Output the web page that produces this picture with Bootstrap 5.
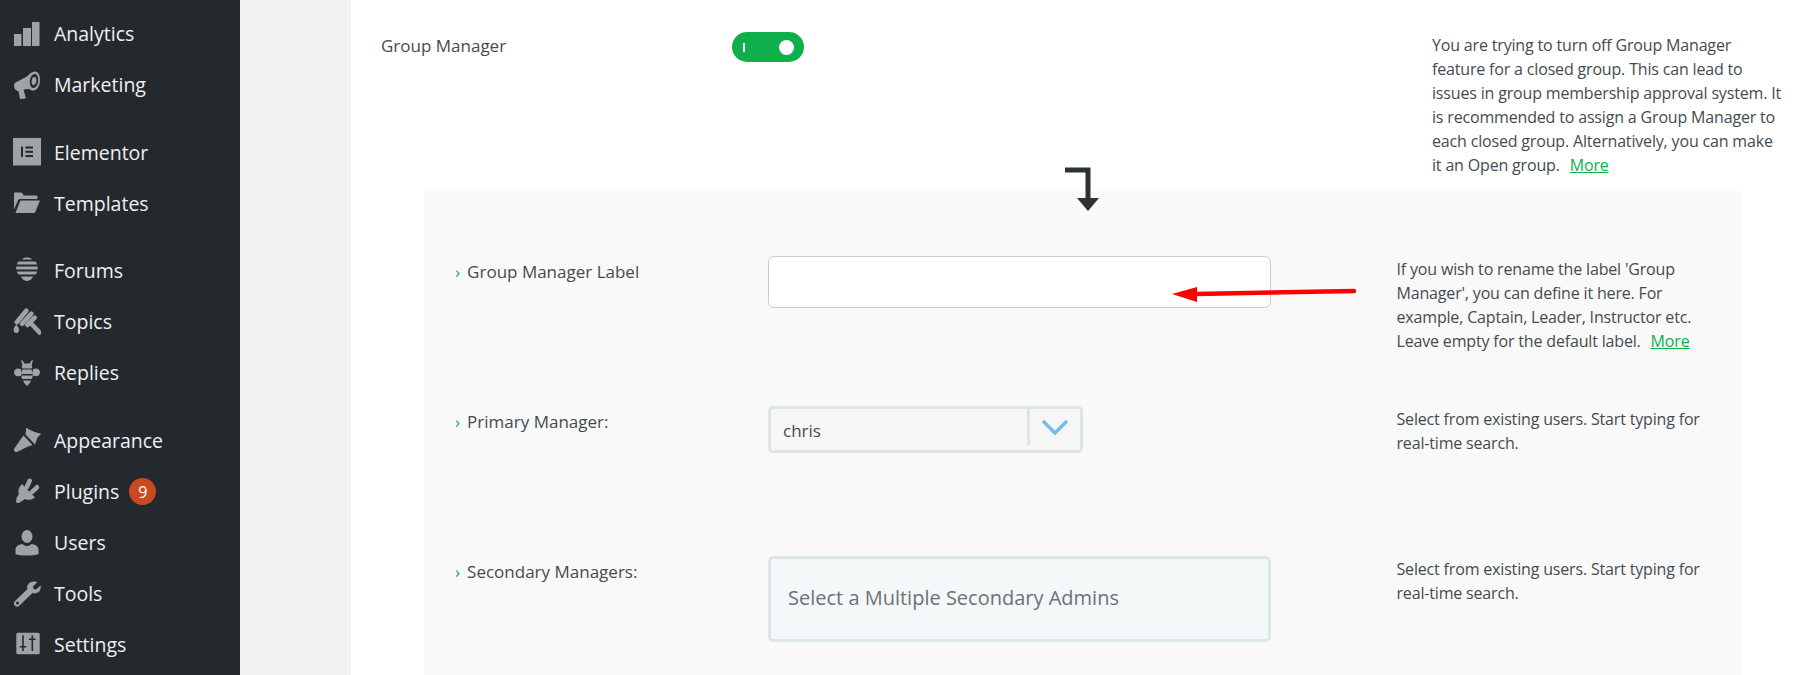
<!DOCTYPE html>
<html lang="en">
<head>
<meta charset="utf-8">
<title>Group Manager settings</title>
<link href="https://cdn.jsdelivr.net/npm/bootstrap@5.3.0/dist/css/bootstrap.min.css" rel="stylesheet">
<style>
html,body{height:675px;overflow:hidden;background:#f1f1f1}
body{font-family:"Open Sans","Noto Sans",sans-serif;color:#444b50}
.shell{height:675px;overflow:hidden}
.side{width:240px;flex:none;background:#24292d;padding-top:8px}
.side-list{list-style:none;margin:0;padding:0}
.side-item{height:51px;display:flex;align-items:center;padding-left:13px;color:#f0f0f1;font-size:19.5px}
.side-gap{margin-bottom:16.750px}
.side-ico{width:28px;height:28px;flex:none;margin-right:13px;fill:#9ea3a8}
.side-ico .cut{fill:#24292d}
.side-ico .ln{fill:none;stroke:#24292d;stroke-width:1.6}
.side-ico .bar{fill:none;stroke:#9ea3a8;stroke-width:4.600;stroke-linecap:round}
.count{width:27px;height:27px;border-radius:50%;background:#ca4a1f;color:#fff;font-size:16px;margin-left:10px}
.mainarea{flex:1;padding-left:111px;min-width:0}
.sheet{background:#fff;height:675px;position:relative}
.top-row{height:191px;padding-top:32px}
.lab-top{width:381px;flex:none;padding-left:30px;font-size:17px;line-height:28px}
.tgl-col{width:700px;flex:none}
.tgl{width:72px;height:30px;border-radius:15px;background:#0fb04c;padding:0 11px}
.tgl-i{width:2px;height:9px;background:#fff}
.tgl-k{width:15px;height:15px;border-radius:50%;background:#fff;margin-left:auto;margin-right:-1px}
.note{font-size:16px;line-height:24px;letter-spacing:-.17px}
.note-top{width:353px;flex:none;margin-top:1px}
.note a{color:#0fb04c;margin-left:6px}
.panel{margin-left:73px;margin-right:70px;background:#f9f9f9;height:484px;padding-top:65px}
.set-row{height:150px}
.lab{width:344px;flex:none;padding-left:31px;font-size:17px;line-height:28px;margin-top:2px}
.lab::before{content:"\203A";color:#0fb04c;margin-right:7px}
.ctl{width:628.500px;flex:none}
.note-p{width:305px;flex:none;margin-top:1px}
.f-text{width:503px;height:52px;background:#fff;border:1px solid #ccc;border-radius:6px}
.f-sel{width:315px;height:47px;background:#f6f6f6;border:3px solid #dbe6e9;border-radius:5px;font-size:17px;padding:0 0 0 12px;color:#444b50}
.f-sel-t{flex:1;padding-top:2px}
.f-sel-b{width:53px;height:36px;border-left:3px solid #dbe6e9;align-self:flex-start}
.f-sel-b svg{width:30px;height:18px}
.f-multi{width:503px;height:86px;background:#f4f8f9;border:3px solid #dbe6e9;border-radius:5px;padding:0 0 2px 17px;font-size:20px;color:#6c7277}
.over{position:absolute;left:0;top:0;width:1460px;height:320px;pointer-events:none}
</style>
</head>
<body>
<div class="shell d-flex">
  <nav class="side">
    <ul class="side-list">
      <li class="side-item"><svg class="side-ico" viewBox="0 0 28 28"><rect x="1" y="14" width="7.500" height="12"/><rect x="10" y="8" width="8" height="18"/><rect x="19" y="2" width="7.500" height="24"/></svg>Analytics</li>
      <li class="side-item side-gap"><svg class="side-ico" viewBox="0 0 28 28"><path d="M1 14.500C1 12.500 2 11.500 4 10.800L14 5.500C16 3 19 .5 22 .5C25 .5 27 4 27 9C27 15 24 19.500 20.500 19.500C19 19.500 17.500 19 16.500 18L10.500 18.500L13 27.500L7 28L5.500 20C3 20 1 17.500 1 14.500Z"/><ellipse class="cut" cx="21" cy="10" rx="4.200" ry="7" transform="rotate(8 21 10)"/><ellipse cx="21" cy="10" rx="2.300" ry="4" transform="rotate(8 21 10)"/></svg>Marketing</li>
      <li class="side-item"><svg class="side-ico" viewBox="0 0 28 28"><rect width="28" height="27.500"/><rect class="cut" x="8" y="8.500" width="2" height="10.500"/><rect class="cut" x="12.500" y="8.500" width="7.500" height="2"/><rect class="cut" x="12.500" y="12.800" width="7.500" height="2"/><rect class="cut" x="12.500" y="17" width="7.500" height="2"/></svg>Elementor</li>
      <li class="side-item side-gap"><svg class="side-ico" viewBox="0 0 28 28"><path d="M1 4.500C1 3.800 1.500 3.500 2 3.500H8.500L11 6.500H23C24 6.500 24.500 7 24.500 8V10H7.500C6 10 5.500 10.500 5 11.500L1 20.500Z"/><path d="M7.800 11.500H27L22.500 22.500C22.200 23.500 21.500 24 20.500 24H2.500L7 12.500C7.200 11.800 7.500 11.500 7.800 11.500Z"/></svg>Templates</li>
      <li class="side-item"><svg class="side-ico" viewBox="0 0 28 28"><path d="M9 2.500C10 1 11.500 .5 14 .5C16.500 .5 18 1 19 2.500Z"/><path d="M5.500 4.500H22.500C23.500 5.500 24 6.500 24.300 7.500H3.700C4 6.500 4.500 5.500 5.500 4.500Z"/><path d="M3.500 9.500H24.500C25 10.500 25 11.500 24.800 12.500H3.200C3 11.500 3 10.500 3.500 9.500Z"/><path d="M3.700 14.500H24.300C24 15.500 23.500 16.500 22.500 17.500H5.500C4.500 16.500 4 15.500 3.700 14.500Z"/><path d="M8 19.500H20C19 21.500 18 23.500 14 24C10 23.500 9 21.500 8 19.500Z"/></svg>Forums</li>
      <li class="side-item"><svg class="side-ico" viewBox="0 0 28 28"><path class="bar" d="M3.800 14.200L13.300 2.800"/><path class="bar" d="M9 15.700L18.300 5.700"/><path class="bar" d="M14.300 17L21.700 9.700"/><path class="bar" d="M17 14.300L26.500 24.500"/><path d="M3.300 16.500C4.800 18.500 6 20 6 22C6 23.800 4.800 25 3.300 25C1.800 25 .6 23.800 .6 22C.6 20 1.800 18.500 3.300 16.500Z"/></svg>Topics</li>
      <li class="side-item side-gap"><svg class="side-ico" viewBox="0 0 28 28"><path d="M9 1L11.500 4.500H16.500L19 1L20 1.500L18.500 6C19.500 7 19.500 8.500 18.500 9.500H9.500C8.500 8.500 8.500 7 9.500 6L8 1.500Z"/><path d="M8 10.500C5 8.500 1 10 1 13.500C1 17 4.500 18 8.500 16.500Z"/><path d="M20 10.500C23 8.500 27 10 27 13.500C27 17 23.500 18 19.500 16.500Z"/><path d="M9.500 10.500H18.500C19.500 12 19.800 13.500 19.800 15H8.200C8.200 13.500 8.500 12 9.500 10.500Z"/><path d="M8.300 16.500H19.700C19.500 18 19.300 19 18.800 20H9.200C8.700 19 8.500 18 8.300 16.500Z"/><path d="M10 21.500H18C17 24 15.500 26 14 27C12.500 26 11 24 10 21.500Z"/></svg>Replies</li>
      <li class="side-item"><svg class="side-ico" viewBox="0 0 28 28"><path d="M13.300 .7C18 3.500 23 6 28.300 6.700L24.500 10.500L22 17.500L12.500 7.500Z"/><path d="M10.500 8.500L19.500 18L15 19.500L4.500 24.800C3 25.700 .3 24.500 1 22L7.500 12.500Z"/></svg>Appearance</li>
      <li class="side-item"><svg class="side-ico" viewBox="0 0 28 28"><path class="bar" d="M16.700 2.800L13.800 9"/><path class="bar" d="M24 9.300L18.800 14.200"/><path d="M9 6L22 19.500C19 22 15 22.500 12 21L6 25L3 24.500L3.500 20L6 16C4.500 13 6 9 9 6Z"/></svg><span>Plugins</span><span class="count d-flex align-items-center justify-content-center">9</span></li>
      <li class="side-item"><svg class="side-ico" viewBox="0 0 28 28"><ellipse cx="14" cy="7.500" rx="5.500" ry="6.500"/><path d="M2.500 20C3 17 6 15.500 9.500 15C11 16.500 12.500 17 14 17C15.500 17 17 16.500 18.500 15C22 15.500 25 17 25.500 20V25C21 27 7 27 2.500 25Z"/></svg>Users</li>
      <li class="side-item"><svg class="side-ico" viewBox="0 0 28 28"><path d="M20.500 1.500C22 1.200 23.500 1.500 24.500 2L20 6.500L20.500 9L23 9.500L27.500 5.500C28 8 27.500 10.500 25.500 12C23.500 13.500 21.500 13.800 19.500 13L6.500 25.500C5 27 3 27 1.800 25.800C.5 24.500 .5 22.500 2 21L14.500 9C13.800 7 14 5 16 3.200C17 2.300 19 1.600 20.500 1.500Z"/><circle class="cut" cx="4.500" cy="23" r="1.500"/></svg>Tools</li>
      <li class="side-item"><svg class="side-ico" viewBox="0 0 28 28"><rect x="3.300" y="1.700" width="23.400" height="21.600" rx="1.500"/><path class="ln" d="M10 4.300V20M6.700 15.700H13.300M19.300 4.300V20M16 8.300H22.700"/></svg>Settings</li>
    </ul>
  </nav>
  <main class="mainarea">
    <div class="sheet">
      <div class="top-row d-flex align-items-start">
        <div class="lab-top">Group Manager</div>
        <div class="tgl-col"><div class="tgl d-flex align-items-center"><span class="tgl-i"></span><span class="tgl-k"></span></div></div>
        <div class="note note-top">You are trying to turn off Group Manager feature for a closed group. This can lead to issues in group membership approval system. It is recommended to assign a Group Manager to each closed group. Alternatively, you can make it an Open group. <a href="#">More</a></div>
      </div>
      <div class="panel">
        <div class="set-row d-flex align-items-start">
          <div class="lab">Group Manager Label</div>
          <div class="ctl"><div class="f-text"></div></div>
          <div class="note note-p">If you wish to rename the label 'Group Manager', you can define it here. For example, Captain, Leader, Instructor etc. Leave empty for the default label. <a href="#">More</a></div>
        </div>
        <div class="set-row d-flex align-items-start">
          <div class="lab">Primary Manager:</div>
          <div class="ctl"><div class="f-sel d-flex align-items-center"><span class="f-sel-t">chris</span><span class="f-sel-b d-flex align-items-center justify-content-center"><svg viewBox="0 0 30 18"><path d="M3 3L15 15L27 3" fill="none" stroke="#77bce6" stroke-width="3.500"/></svg></span></div></div>
          <div class="note note-p">Select from existing users. Start typing for real-time search.</div>
        </div>
        <div class="set-row d-flex align-items-start">
          <div class="lab">Secondary Managers:</div>
          <div class="ctl"><div class="f-multi d-flex align-items-center">Select a Multiple Secondary Admins</div></div>
          <div class="note note-p">Select from existing users. Start typing for real-time search.</div>
        </div>
      </div>
      <svg class="over" viewBox="0 0 1460 320">
        <path d="M714 170H737V198" fill="none" stroke="#2b3238" stroke-width="5"/>
        <path d="M726 198H748L737 211Z" fill="#2b3238"/>
        <path d="M1003 291L845 294" fill="none" stroke="#f00" stroke-width="4.500" stroke-linecap="round"/>
        <path d="M821 294L846 287V302Z" fill="#f00"/>
      </svg>
    </div>
  </main>
</div>
<script src="https://cdn.jsdelivr.net/npm/bootstrap@5.3.0/dist/js/bootstrap.bundle.min.js"></script>
</body>
</html>
